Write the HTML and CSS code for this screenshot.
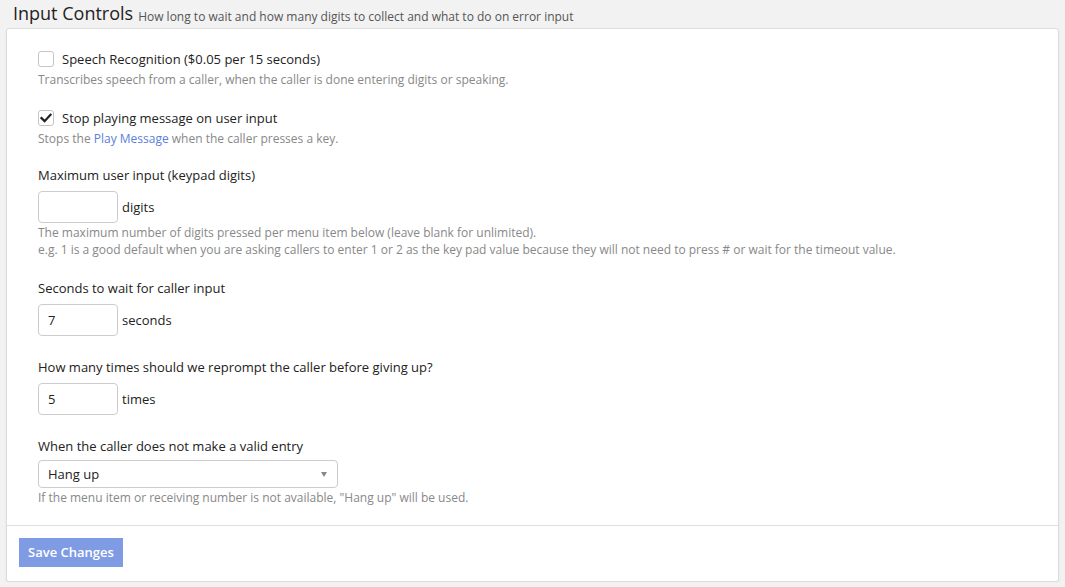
FILE: index.html
```html
<!DOCTYPE html>
<html>
<head>
<meta charset="utf-8">
<link rel="stylesheet" href="styles.css">
</head>
<body>
<div class="header">
  <span class="title">Input Controls</span>
  <span class="subtitle">How long to wait and how many digits to collect and what to do on error input</span>
</div>
<div class="card">
  <div class="card-body">
    <div class="group check-group first">
      <label class="check-row"><span class="checkbox"></span><span>Speech Recognition ($0.05 per 15 seconds)</span></label>
      <div class="help">Transcribes speech from a caller, when the caller is done entering digits or speaking.</div>
    </div>
    <div class="group check-group">
      <label class="check-row"><span class="checkbox checked"><svg width="12" height="10" viewBox="0 0 12 10"><path d="M1.5 5.2 L4.6 8.2 L10.5 1.8" fill="none" stroke="#222" stroke-width="2.3" stroke-linecap="square"/></svg></span><span>Stop playing message on user input</span></label>
      <div class="help">Stops the <a class="link">Play Message</a> when the caller presses a key.</div>
    </div>
    <div class="group">
      <div class="field-label">Maximum user input (keypad digits)</div>
      <div class="input-row"><span class="input"></span><span class="unit">digits</span></div>
      <div class="help">The maximum number of digits pressed per menu item below (leave blank for unlimited).<br>e.g. 1 is a good default when you are asking callers to enter 1 or 2 as the key pad value because they will not need to press # or wait for the timeout value.</div>
    </div>
    <div class="group plain">
      <div class="field-label">Seconds to wait for caller input</div>
      <div class="input-row"><span class="input">7</span><span class="unit">seconds</span></div>
    </div>
    <div class="group plain">
      <div class="field-label">How many times should we reprompt the caller before giving up?</div>
      <div class="input-row"><span class="input">5</span><span class="unit">times</span></div>
    </div>
    <div class="group last">
      <div class="field-label select-label">When the caller does not make a valid entry</div>
      <div class="select"><span>Hang up</span><span class="caret"></span></div>
      <div class="help">If the menu item or receiving number is not available, "Hang up" will be used.</div>
    </div>
  </div>
  <div class="card-footer">
    <span class="btn">Save Changes</span>
  </div>
</div>
</body>
</html>
```

FILE: styles.css
```css
html, body {
  margin: 0;
  padding: 0;
  background: #f2f2f2;
  font-family: "Open Sans", "Liberation Sans", sans-serif;
  color: #333;
}
.header {
  height: 28px;
  padding-left: 13px;
  display: flex;
  align-items: baseline;
  gap: 5px;
  line-height: 28px;
}
.title {
  font-size: 18px;
  color: #222;
  position: relative;
  top: -1px;
}
.subtitle {
  font-size: 12px;
  color: #555;
}
.card {
  margin: 0 6px 0 6px;
  background: #fff;
  border: 1px solid #dcdcdc;
  border-radius: 3px;
  box-shadow: 0 1px 2px rgba(0,0,0,0.08);
}
.card-body {
  padding: 20px 31px 19px 31px;
}
.group {
  margin-bottom: 20px;
}
.check-group.first {
  margin-bottom: 20px;
}
.check-group {
  margin-bottom: 18px;
}
.check-group .help {
  margin-top: 2px;
}
.group.plain {
  margin-bottom: 21px;
}
.group.last {
  margin-bottom: 0;
}
.check-row {
  display: flex;
  align-items: center;
  gap: 8px;
  font-size: 13px;
  line-height: 20px;
  height: 20px;
  color: #222;
}
.checkbox {
  width: 14px;
  height: 14px;
  border: 1px solid #c4c4c4;
  border-radius: 3px;
  background: #fff;
  display: flex;
  align-items: center;
  justify-content: center;
}
.help {
  font-size: 12px;
  line-height: 17px;
  color: #888;
  margin-top: 1px;
}
.link {
  color: #5b80d8;
}
.field-label {
  font-size: 13px;
  line-height: 20px;
  color: #222;
  margin-bottom: 6px;
}
.field-label.select-label {
  margin-bottom: 4px;
}
.input-row {
  display: flex;
  align-items: center;
  gap: 4px;
}
.input {
  box-sizing: border-box;
  width: 80px;
  height: 32px;
  border: 1px solid #ccc;
  border-radius: 4px;
  padding-left: 9px;
  font-size: 13px;
  line-height: 30px;
  color: #222;
}
.unit {
  font-size: 13px;
  color: #222;
}
.select {
  box-sizing: border-box;
  width: 300px;
  height: 28px;
  border: 1px solid #ccc;
  border-radius: 4px;
  padding: 0 9px;
  font-size: 13px;
  line-height: 26px;
  color: #222;
  display: flex;
  align-items: center;
  justify-content: space-between;
}
.caret {
  width: 0;
  height: 0;
  border-left: 3px solid transparent;
  border-right: 3px solid transparent;
  border-top: 5px solid #888;
  margin-right: 1px;
}
.card-footer {
  border-top: 1px solid #dddddd;
  padding: 12px 12px 14px 12px;
}
.btn {
  display: inline-block;
  background: #7f9be3;
  color: #fff;
  font-size: 13px;
  font-weight: 600;
  line-height: 29px;
  height: 29px;
  padding: 0 9px;
}
```
